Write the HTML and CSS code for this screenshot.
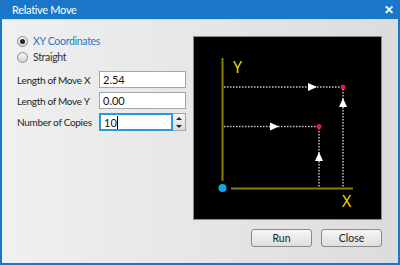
FILE: index.html
```html
<!DOCTYPE html>
<html lang="en">
<head>
    <meta charset="UTF-8">
    <title>Relative Move</title>
    <link rel="stylesheet" href="styles.css">
</head>
<body>
    <div class="window">
        <div class="titlebar">
            <span class="title">Relative Move</span>
            <span class="close">&#x2715;</span>
        </div>
        <div class="content">
            <div class="main">
                <div class="form">
                    <label class="radio checked"><span class="dot"></span>XY Coordinates</label>
                    <label class="radio"><span class="dot"></span>Straight</label>

                    <div class="field">
                        <span class="label">Length of Move X</span>
                        <input type="text" class="input" value="2.54">
                    </div>
                    <div class="field">
                        <span class="label">Length of Move Y</span>
                        <input type="text" class="input" value="0.00">
                    </div>
                    <div class="field">
                        <span class="label">Number of Copies</span>
                        <div class="spin">
                            <span class="input focus">10<span class="caret"></span></span>
                            <span class="spin-btns">
                                <span class="arrow up"></span>
                                <span class="arrow down"></span>
                            </span>
                        </div>
                    </div>
                </div>
                <div class="preview">
                    <svg width="187" height="182" viewBox="195 37 187 182">
                        <line x1="223.5" y1="58" x2="223.5" y2="181" stroke="#8a7d00" stroke-width="2"/>
                        <line x1="232" y1="188.5" x2="354" y2="188.5" stroke="#8a7d00" stroke-width="2"/>
                        <text x="234" y="73" class="axis">Y</text>
                        <text x="343" y="207" class="axis">X</text>

                        <line x1="225" y1="87" x2="342" y2="87" class="dash"/>
                        <line x1="344" y1="89" x2="344" y2="188" class="dash"/>
                        <line x1="225" y1="126.5" x2="318" y2="126.5" class="dash"/>
                        <line x1="320" y1="128" x2="320" y2="188" class="dash"/>

                        <polygon points="309,83 318,87 309,91" fill="#fff"/>
                        <polygon points="271,122.5 280,126.5 271,130.5" fill="#fff"/>
                        <polygon points="340,107 344,98 348,107" fill="#fff"/>
                        <polygon points="316,161 320,152 324,161" fill="#fff"/>

                        <circle cx="344" cy="87" r="2.5" fill="#e0106e"/>
                        <circle cx="320" cy="126.5" r="2.5" fill="#e0106e"/>
                        <circle cx="223.5" cy="188" r="4" fill="#10a8e8"/>
                    </svg>
                </div>
            </div>
            <div class="actions">
                <button class="btn">Run</button>
                <button class="btn">Close</button>
            </div>
        </div>
    </div>
</body>
</html>
```
FILE: styles.css
```css
body {
    margin: 0;
    font-family: Lato, "Open Sans", sans-serif;
    font-size: 10px;
    letter-spacing: -0.3px;
    color: #222;
}
.window {
    width: 400px;
    height: 265px;
    box-sizing: border-box;
    background: #1a76c8;
    padding: 0 2px 2px 2px;
    display: flex;
    flex-direction: column;
}
.titlebar {
    height: 19px;
    display: flex;
    align-items: center;
    justify-content: space-between;
    color: #fff;
    padding: 0 4px 0 10px;
}
.title {
    font-size: 11px;
}
.close {
    font-size: 12px;
    font-weight: bold;
}
.content {
    flex: 1;
    background: linear-gradient(to right, #f0f0f0, #dcdcdc);
    border-top: 1px solid #d8d8d8;
    display: flex;
    flex-direction: column;
    padding: 0 16px 0 15px;
}
.main {
    display: flex;
    justify-content: space-between;
}
.form {
    flex: none;
    padding-top: 13px;
    display: flex;
    flex-direction: column;
}
.radio {
    display: flex;
    align-items: center;
    height: 16px;
    color: #333;
    white-space: nowrap;
    font-size: 10.5px;
}
.radio.checked {
    color: #1a7acb;
}
.dot {
    width: 9px;
    height: 9px;
    border-radius: 50%;
    border: 1px solid #8a8a8a;
    background: linear-gradient(#f4f4f4, #d6d6d6);
    margin-right: 5px;
    display: inline-flex;
    align-items: center;
    justify-content: center;
}
.radio.checked .dot::after {
    content: "";
    width: 5px;
    height: 5px;
    border-radius: 50%;
    background: #222;
}
.field {
    display: flex;
    align-items: center;
    margin-top: 4px;
}
.field:first-of-type {
    margin-top: 6px;
}
.label {
    width: 82px;
    flex: none;
    white-space: nowrap;
}
.input {
    width: 87px;
    height: 17px;
    box-sizing: border-box;
    border: 1px solid #a5a5a5;
    background: #fff;
    font: inherit;
    font-size: 11px;
    letter-spacing: 0;
    padding: 0 3px;
    color: #111;
    outline: none;
}
.spin {
    display: flex;
    align-items: stretch;
}
.input.focus {
    width: 74px;
    height: 18px;
    border: 1px solid #2a9ae0;
    box-shadow: inset 0 0 0 1px #2a9ae0;
    display: flex;
    align-items: center;
    padding-left: 4px;
}
.caret {
    width: 1px;
    height: 13px;
    background: #000;
}
.spin-btns {
    width: 12px;
    border: 1px solid #a5a5a5;
    border-left: none;
    background: linear-gradient(#f6f6f6, #dcdcdc);
    display: flex;
    flex-direction: column;
    justify-content: space-around;
    align-items: center;
}
.arrow {
    width: 0;
    height: 0;
    border-left: 3px solid transparent;
    border-right: 3px solid transparent;
}
.arrow.up {
    border-bottom: 3px solid #222;
}
.arrow.down {
    border-top: 3px solid #222;
}
.preview {
    margin-top: 16px;
    border: 1px solid #8c8c8c;
    background: #000;
    line-height: 0;
}
.axis {
    fill: #f0e000;
    font-family: "Open Sans", sans-serif;
    font-size: 16px;
    letter-spacing: 0;
}
.dash {
    stroke: #c8c8c8;
    stroke-width: 1.5;
    stroke-dasharray: 1.5 1.5;
}
.actions {
    display: flex;
    justify-content: flex-end;
    gap: 9px;
    margin-top: 9px;
}
.btn {
    width: 61px;
    height: 18px;
    font: inherit;
    font-size: 10.5px;
    color: #222;
    border: 1px solid #8a8a8a;
    border-radius: 3px;
    background: linear-gradient(#f6f6f6, #dedede);
    padding: 0;
}
```
